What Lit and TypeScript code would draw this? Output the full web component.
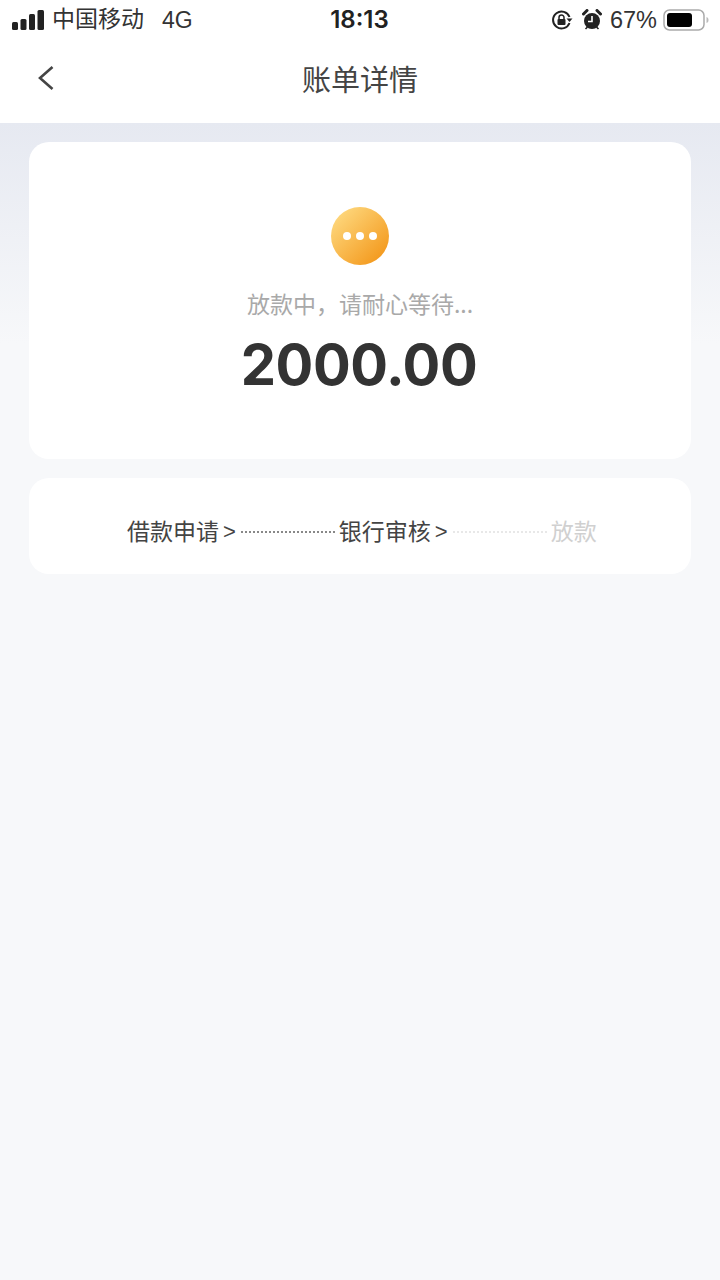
import { LitElement, html, css } from "lit";
import { customElement } from "lit/decorators.js";

@customElement("app-root")
export class AppRoot extends LitElement {
  static styles = css`
    :host {
      display: block;
      width: 720px;
      height: 1280px;
      overflow: hidden;
      background: #f7f8fa;
      font-family: "Inter", "Liberation Sans", "Noto Sans CJK SC", sans-serif;
      color: #333;
    }
    .top { background: #fff; height: 123px; display: flex; flex-direction: column; }
    .status {
      height: 40px;
      display: flex;
      align-items: center;
      justify-content: space-between;
      padding: 0 11px 0 12px;
      color: #222;
      position: relative;
    }
    .left, .right { display: flex; align-items: center; }
    .carrier { font: 23px/34px "Noto Sans CJK SC", sans-serif; margin: 0 0 0 8px; height: 34px; padding-bottom: 6px; color: #333; }
    .net { font: 23px/40px "Liberation Sans", sans-serif; margin-left: 18px; color: #333; }
    .time {
      position: absolute;
      left: 0; right: 0;
      text-align: center;
      font: 600 24px/40px "Inter", sans-serif;
      color: #222;
      padding-right: 1px;
    }
    .pct { font: 23.5px/40px "Liberation Sans", sans-serif; color: #333; margin: 0 6px 0 8px; }
    .alarm { margin-left: 9px; }
    .nav { flex: 1; display: flex; align-items: center; justify-content: center; position: relative; padding-bottom: 8px; }
    .nav h1 { margin: 0; font: 400 29px/40px "Noto Sans CJK SC", sans-serif; color: #444; }
    .back { position: absolute; left: 37px; top: 25px; }
    .content {
      background: linear-gradient(#e6e9f1 0, #f7f8fa 220px);
      height: 1157px;
      padding: 19px 29px 0;
      box-sizing: border-box;
      display: flex;
      flex-direction: column;
      gap: 19px;
    }
    .card { background: #fff; border-radius: 20px; }
    .main {
      height: 317px;
      display: flex;
      flex-direction: column;
      align-items: center;
      padding-top: 65px;
      box-sizing: border-box;
    }
    .icon {
      width: 58px; height: 58px; border-radius: 50%;
      background: linear-gradient(135deg, #ffe08a, #f2900f);
      display: flex; align-items: center; justify-content: center; gap: 5px;
    }
    .icon i { width: 8px; height: 8px; border-radius: 50%; background: #fff; display: block; }
    .msg { font: 23px/34px "Noto Sans CJK SC", sans-serif; color: #a9a9a9; margin-top: 21px; }
    .amount { font: 700 56px/68px "Inter", "Liberation Sans", sans-serif; color: #333; margin: 11px 2px 0 0; letter-spacing: -0.4px; }
    .steps {
      height: 96px;
      display: flex;
      align-items: center;
      padding: 12px 0 0 98px;
      box-sizing: border-box;
    }
    .step { font: 23px/32px "Noto Sans CJK SC", sans-serif; color: #444; white-space: nowrap; position: relative; top: -2px; }
    .step.off { color: #d0d0d0; }
    .gt { font: 22px/32px "Liberation Sans", sans-serif; color: #444; margin-left: 4px; }
    .dots { width: 94px; border-top: 2px dotted #888; margin: 0 4px 0 5px; height: 0; }
    .dots.off { border-top-color: #e8e8e8; }
  `;

  render() {
    return html`
      <div class="top">
        <div class="status">
          <div class="left">
            <svg width="32" height="20" viewBox="0 0 32 20" fill="#222">
              <rect x="0" y="12" width="6" height="8" rx="1.5"/>
              <rect x="8.500" y="9" width="6" height="11" rx="1.5"/>
              <rect x="17" y="4" width="6" height="16" rx="1.5"/>
              <rect x="25.500" y="0" width="6.500" height="20" rx="1.5"/>
            </svg>
            <span class="carrier">中国移动</span>
            <span class="net">4G</span>
          </div>
          <div class="time">18:13</div>
          <div class="right">
            <svg width="22" height="22" viewBox="0 0 22 22" fill="none">
              <path d="M18.5 14A8.5 8.5 0 1 1 18.5 8" stroke="#222" stroke-width="2"/>
              <path d="M15.5 9.5h6l-3 3.5z" fill="#222"/>
              <rect x="6.5" y="10" width="8" height="6" rx="1" fill="#222"/>
              <path d="M8 10V8.500a2.500 2.500 0 0 1 5 0V10" stroke="#222" stroke-width="1.500"/>
            </svg>
            <svg class="alarm" width="20" height="22" viewBox="0 0 20 22" fill="none">
              <circle cx="10" cy="12" r="8" fill="#222"/>
              <path d="M1.500 5 5 1.500M15 1.500 18.500 5" stroke="#222" stroke-width="3" stroke-linecap="round"/>
              <path d="M3.500 20l2-2M16.500 20l-2-2" stroke="#222" stroke-width="1.600"/>
              <path d="M10 7v5.500H6" stroke="#fff" stroke-width="1.600"/>
            </svg>
            <span class="pct">67%</span>
            <svg width="46" height="22" viewBox="0 0 46 22" fill="none">
              <rect x="1" y="1" width="40" height="20" rx="5.500" stroke="#aaa" stroke-width="1.500"/>
              <rect x="4" y="4" width="25" height="14" rx="3" fill="#000"/>
              <path d="M43.500 8c1.500.5 2 1.500 2 3s-.5 2.500-2 3z" fill="#bbb"/>
            </svg>
          </div>
        </div>
        <div class="nav">
          <svg class="back" width="18" height="26" viewBox="0 0 18 26" fill="none">
            <path d="M15.500 2 3 13l12.500 11" stroke="#444" stroke-width="2.600"/>
          </svg>
          <h1>账单详情</h1>
        </div>
      </div>
      <div class="content">
        <div class="card main">
          <div class="icon"><i></i><i></i><i></i></div>
          <div class="msg">放款中，请耐心等待...</div>
          <div class="amount">2000.00</div>
        </div>
        <div class="card steps">
          <span class="step">借款申请</span><span class="gt">&gt;</span>
          <span class="dots"></span>
          <span class="step">银行审核</span><span class="gt">&gt;</span>
          <span class="dots off"></span>
          <span class="step off">放款</span>
        </div>
      </div>
    `;
  }
}
